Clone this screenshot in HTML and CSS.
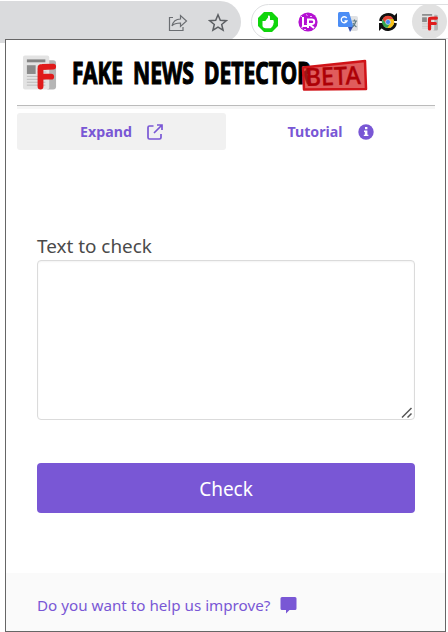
FILE: index.html
```html
<!DOCTYPE html>
<html lang="en">
<head>
<meta charset="utf-8">
<title>Fake News Detector</title>
<link rel="stylesheet" href="styles.css">
</head>
<body>
<svg width="0" height="0" class="defs">
  <symbol id="news" viewBox="0 0 36 36">
    <path d="M26 5h5q3 0 3 3v24q0 3-3 3h-6z" fill="#b5b5b5"/>
    <rect x="0" y="0" width="27" height="35" rx="2" fill="#e3e3e3"/>
    <rect x="4" y="4" width="19" height="3" fill="#858585"/>
    <rect x="4" y="10" width="9" height="9" fill="#8b8b8b"/>
    <path d="M15 11h9M15 14h9M15 17h9M4 21.500h19M4 24.500h19M4 27.500h19M4 30.500h19" stroke="#b9b9b9"/>
    <path d="M18 32V13q0-1.200 1.500-1.200L31 11.500M18 21.800h11" fill="none" stroke="#e01b1b" stroke-width="6" stroke-linecap="round" stroke-linejoin="round"/>
  </symbol>
</svg>
<div class="toolbar">
  <div class="address">
    <svg class="share" width="20" height="18" viewBox="0 0 20 18"><path d="M5 3.500H1.500V16.500H15V13M4 12C5 7.500 8 5 12.500 5V1.500L18.500 7l-6 5.500V9C8.500 9 6 9.500 4 12Z" fill="none" stroke="#6b6e72" stroke-width="1.200"/></svg>
    <svg width="20" height="19" viewBox="0 0 20 19"><path d="M10 1.800l2.300 5.400 5.900.5-4.500 3.800 1.400 5.700L10 14.200l-5.100 3 1.400-5.700L1.800 7.700l5.900-.5z" fill="none" stroke="#5c5f63" stroke-width="1.500"/></svg>
  </div>
  <div class="extensions">
    <svg width="20" height="20" viewBox="0 0 20 20"><path d="M6 0h8l6 6v8l-6 6H6l-6-6V6z" fill="#10d50c"/><path d="M4.500 9h2.800L10 5.500V3.700q1.700-.8 2 1V8h3q1.300.5.700 1.800.4 1-.3 1.800.2 1.200-.6 1.800 0 1.300-1.200 1.600 0 1.200-1.500 1.200H7.500q-2.200-.2-3-2z" fill="#fff"/></svg>
    <svg width="20" height="20" viewBox="0 0 20 20"><circle cx="10" cy="10" r="9.600" fill="#b411d2"/><path d="M5 5v9h5M10 16V7.500h3.700q2.500 0 2.500 2.300T13.700 12H11l5 4" fill="none" stroke="#fff" stroke-width="2"/><path d="M3 4l1 1M8 2.500l1.500 1M12 4.500h2M3 15l2 1M6 17.500h2" stroke="#edbff5"/></svg>
    <svg width="20" height="20" viewBox="0 0 20 20"><path d="M8 4h10q2 0 2 2v11q0 2-2 2h-6z" fill="#dfe1e3"/><path d="M10 15h5l-3 5z" fill="#3650ac"/><path d="M1.500 0H11l4.500 15H1.500Q0 15 0 13.500v-12Q0 0 1.500 0z" fill="#4b8df5"/><path d="M8.700 6A3 3 0 1 0 9 9H6.500" fill="none" stroke="#fff" stroke-width="1.300"/><path d="M14.500 9H19M16.500 7.500V9M18 9q-1 3.500-3.500 6M15 11q1.500 3 3.500 4" fill="none" stroke="#607d88" stroke-width="1.200"/></svg>
    <svg width="20" height="20" viewBox="0 0 20 20"><path d="M2.500 9a7.700 7.700 0 0 1 14-3M17.500 11a7.700 7.700 0 0 1-14 3" fill="none" stroke="#111" stroke-width="3"/><path d="M19 1v8h-8zM1 19v-8h8z" fill="#111"/><circle cx="10" cy="10" r="6" fill="#35a852"/><path d="M4.600 7.200A6 6 0 0 1 15.400 7.200H10L8 11.500z" fill="#e84435"/><path d="M15.400 7.200A6 6 0 0 1 9.300 16L12.500 11 10 7.200z" fill="#fbc116"/><circle cx="10" cy="10" r="2.500" fill="#4285f4" stroke="#eee" stroke-width=".6"/></svg>
    <span class="active"><svg width="19" height="19"><use href="#news"/></svg></span>
  </div>
</div>
<main class="popup">
  <header>
    <svg width="35" height="36" class="logo"><use href="#news"/></svg>
    <svg class="title" width="300" height="48" viewBox="0 0 300 48">
      <text x="1" y="37" textLength="51" lengthAdjust="spacingAndGlyphs">FAKE</text>
      <text x="62" y="37" textLength="61" lengthAdjust="spacingAndGlyphs">NEWS</text>
      <text x="133" y="37" textLength="107" lengthAdjust="spacingAndGlyphs">DETECTOR</text>
      <path d="M232 20.500L294 14l1 28-62 .5z" fill="#d42020" fill-opacity=".73" stroke="#d01318" stroke-width="2.500" stroke-linejoin="round"/>
      <text class="beta" x="235" y="39" textLength="55" lengthAdjust="spacingAndGlyphs" transform="rotate(-2 235 39)">BETA</text>
    </svg>
  </header>
  <nav>
    <a class="tab selected">Expand
      <svg width="16" height="16" viewBox="0 0 16 16"><path d="M6.500 2H2.500Q1 2 1 3.500v10Q1 15 2.500 15h10q1.500 0 1.500-1.500V10M10 1h5v5M14.500 1.500L7 9" fill="none" stroke="#7957d5" stroke-width="1.700"/></svg>
    </a>
    <a class="tab">Tutorial
      <svg width="16" height="16" viewBox="0 0 16 16"><circle cx="8" cy="8" r="7.700" fill="#7957d5"/><path d="M7 3h2.400v2.300H7zM6 6.500h3.400v4.200h1V12H5.800v-1.300h1V8H6z" fill="#fff"/></svg>
    </a>
  </nav>
  <form>
    <label for="text">Text to check</label>
    <div class="field"><textarea id="text"></textarea>
      <svg class="grip" width="12" height="12" viewBox="0 0 12 12"><path d="M1 10.500L10.500 1M6.500 10.500l4-4" stroke="#555" stroke-width="1.500"/></svg>
    </div>
    <button type="button">Check</button>
  </form>
  <footer><span>Do you want to help us improve?</span>
    <svg width="17" height="17" viewBox="0 0 17 17"><path d="M2 0h13q1.500 0 1.500 1.500v10q0 1.500-1.500 1.500H9.500L6 16.500V13H2Q.5 13 .5 11.500v-10Q.5 0 2 0z" fill="#7957d5"/></svg>
  </footer>
</main>
</body>
</html>
```
FILE: styles.css
```css
* { box-sizing: border-box; }
body {
  margin: 0;
  width: 448px;
  height: 632px;
  overflow: hidden;
  background: #fff;
  color: #4a4a4a;
  font-family: "Noto Sans", "Open Sans", sans-serif;
}
svg { display: block; flex: none; }
.defs { position: absolute; }
.toolbar {
  display: flex;
  height: 39px;
  padding-top: 1px;
}
.address {
  display: flex;
  flex: none;
  justify-content: flex-end;
  gap: 20px;
  width: 241px;
  height: 42px;
  padding: 12px 13px 0 0;
  border-radius: 0 21px 21px 0;
  background: #dadbdd;
}
.address .share { margin-top: 1px; }
.extensions {
  display: flex;
  flex: none;
  align-items: center;
  gap: 20px;
  width: 216px;
  height: 35px;
  margin: 3px 0 0 10px;
  padding-left: 6px;
  border: 1px solid #dedfe1;
  border-radius: 18px;
}
.active {
  display: grid;
  place-items: center;
  flex: none;
  width: 35px;
  height: 35px;
  margin-left: -6px;
  border-radius: 50%;
  background: #e1e1e1;
}
.popup {
  position: relative;
  display: flex;
  flex-direction: column;
  width: 441px;
  height: 593px;
  margin-left: 5px;
  border: 1px solid #666;
  background: #fff;
}
header {
  display: flex;
  height: 69px;
  margin: 0 10px 0 11px;
  padding: 15px 0 0 6px;
  border-bottom: 3px solid #f5f5f5;
  box-shadow: inset 0 -1px #bbb;
}
.title {
  overflow: visible;
  margin: -8px 0 0 13px;
  fill: #000;
  font: 700 31px "Noto Sans", sans-serif;
}
.title text { stroke: #000; stroke-width: 1.2px; }
.title .beta {
  font-size: 25px;
  font-weight: 500;
  fill: #ad0006;
  stroke: #ad0006;
  stroke-width: .4px;
  stroke-linejoin: round;
}
nav {
  display: flex;
  height: 37px;
  margin: 4px 10px 0 11px;
}
.tab {
  display: flex;
  align-items: center;
  justify-content: center;
  gap: 15px;
  width: 209px;
  border-radius: 3px;
  color: #7957d5;
  font-size: 14.2px;
  font-weight: 700;
}
.selected { background: #f1f1f1; }
form {
  display: flex;
  flex-direction: column;
  margin: 83px 30px 0 31px;
}
label {
  height: 27px;
  font-size: 18.9px;
  line-height: 27px;
}
.field { position: relative; height: 160px; }
textarea {
  display: block;
  width: 100%;
  height: 100%;
  border: 1px solid #dbdbdb;
  border-radius: 4px;
  box-shadow: inset 0 1px 2px #0000000d;
  resize: none;
}
.grip { position: absolute; right: 2px; bottom: 1px; }
button {
  height: 50px;
  margin-top: 43px;
  padding: 2px 0 0;
  border: 0;
  border-radius: 4px;
  background: #7957d5;
  color: #fff;
  font: 19px/48px "Noto Sans", sans-serif;
}
footer {
  display: flex;
  align-items: center;
  gap: 10px;
  height: 58px;
  margin-top: auto;
  padding: 6px 0 0 31px;
  background: #fafafa;
  color: #7957d5;
  font-size: 15.2px;
}
```
